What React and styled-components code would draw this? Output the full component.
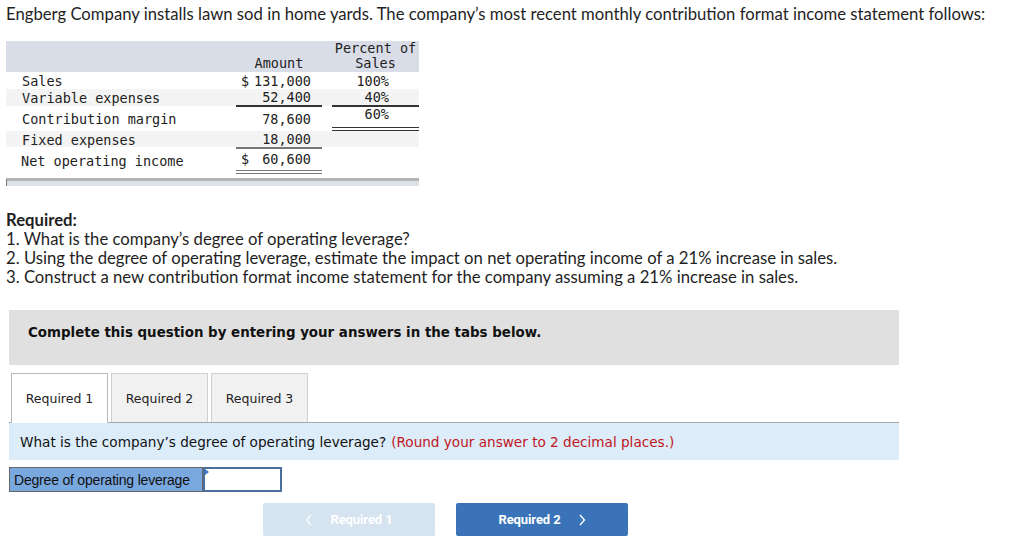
import React from "react";
import styled, { createGlobalStyle } from "styled-components";

const Global = createGlobalStyle`
  html, body { margin: 0; padding: 0; background: #fff; }
  body { font-family: "Lato", "Open Sans", sans-serif; color: #222; }
`;

const Page = styled.div`
  width: 1024px;
  height: 543px;
  overflow: hidden;
  padding-left: 6px;
  box-sizing: border-box;
`;

const Intro = styled.p`
  margin: 0;
  padding-top: 4px;
  font-size: 16.7px;
  line-height: 20px;
  color: #1f1f1f;
`;

const Statement = styled.div`
  margin-top: 17px;
  width: 413px;
  font-family: "DejaVu Sans Mono", monospace;
  font-size: 13.5px;
  color: #222;
`;

const Row = styled.div`
  display: grid;
  grid-template-columns: 230px 86px 10px 87px;
  height: ${(p) => p.$h}px;
  background: ${(p) => p.$bg || "#fff"};
  align-items: ${(p) => p.$align || "center"};
`;

const Label = styled.div`
  padding-left: ${(p) => p.$pl ?? 16}px;
  white-space: pre;
`;

const Cell = styled.div`
  height: 100%;
  box-sizing: border-box;
  display: flex;
  align-items: ${(p) => p.$align || "center"};
  justify-content: ${(p) => p.$justify || "flex-end"};
  padding: ${(p) => p.$pad || "0 11px 0 5px"};
  border-bottom: ${(p) =>
    p.$line === "single"
      ? "2px solid #333"
      : p.$line === "double"
      ? "4px double #333"
      : p.$line === "gray"
      ? "2px solid #777"
      : p.$line === "graydouble"
      ? "4px double #777"
      : "none"};
  white-space: pre;
`;

const HeadCell = styled.div`
  text-align: center;
  line-height: 15px;
  padding-bottom: 1px;
  white-space: pre;
`;

const ScrollBar = styled.div`
  margin-top: 4px;
  height: 5px;
  border-top: 3px solid #b5b5b5;
  border-left: 1px solid #777;
  background: #dde1ea;
`;

const Required = styled.div`
  margin-top: 25px;
  font-size: 16.7px;
  line-height: 19px;
  color: #1f1f1f;
`;

const Bold = styled.div`
  font-weight: 700;
`;

const Section = styled.div`
  margin-left: 3px;
  width: 890px;
`;

const Notice = styled.div`
  margin-top: 23px;
  height: 55px;
  box-sizing: border-box;
  background: #e0e0e0;
  padding: 15px 0 0 19px;
  line-height: 16px;
  font-family: "DejaVu Sans", Verdana, sans-serif;
  font-weight: 700;
  font-size: 13.4px;
  color: #111;
`;

const Tabs = styled.div`
  margin-top: 8px;
  display: flex;
  gap: 3px;
  padding-left: 2px;
  border-bottom: 1px solid #a8a8a8;
`;

const Tab = styled.div`
  width: 97px;
  box-sizing: border-box;
  display: flex;
  align-items: center;
  justify-content: center;
  font-family: "DejaVu Sans", Verdana, sans-serif;
  font-size: 12.5px;
  color: #222;
  border: 1px solid ${(p) => (p.$active ? "#b8b8b8" : "#cfcfcf")};
  border-bottom: none;
  background: ${(p) => (p.$active ? "#fff" : "#f1f1f1")};
  margin-bottom: ${(p) => (p.$active ? "-1px" : "0")};
  height: ${(p) => (p.$active ? "50px" : "49px")};
`;

const Question = styled.div`
  height: 37px;
  background: #dcecf9;
  display: flex;
  align-items: center;
  padding-left: 11px;
  font-family: "DejaVu Sans", Verdana, sans-serif;
  font-size: 13.6px;
  color: #111;
`;

const Hint = styled.span`
  color: #c0161c;
  margin-left: 5px;
`;

const AnswerRow = styled.div`
  margin-top: 7px;
  display: flex;
  height: 25px;
`;

const AnswerLabel = styled.div`
  width: 194px;
  box-sizing: border-box;
  background: #79a8df;
  border: 1px solid #666;
  display: flex;
  align-items: center;
  padding-left: 4px;
  font-family: "Liberation Sans", Arial, sans-serif;
  font-size: 14px;
  letter-spacing: -0.2px;
  color: #111;
`;

const AnswerInput = styled.div`
  position: relative;
  width: 79px;
  box-sizing: border-box;
  background: #fff;
  border: 2px solid #4a6f9c;
`;

const Flag = styled.span`
  position: absolute;
  left: 0;
  top: 0;
  width: 0;
  height: 0;
  border-top: 3px solid transparent;
  border-bottom: 3px solid transparent;
  border-left: 4px solid #3a78c8;
`;

const Nav = styled.div`
  margin-top: 11px;
  display: flex;
  gap: 21px;
  padding-left: 254px;
`;

const NavButton = styled.div`
  width: 172px;
  height: 33px;
  border-radius: 2px;
  background: ${(p) => (p.$disabled ? "#d6e3f1" : "#3a73b8")};
  color: #fff;
  display: flex;
  align-items: center;
  justify-content: center;
  gap: 17px;
  font-family: "Roboto", "Liberation Sans", sans-serif;
  font-weight: 700;
  font-size: 13px;
  letter-spacing: -0.1px;
`;

const Chevron = ({ dir }) => (
  <svg width="8" height="12" viewBox="0 0 8 12" aria-hidden="true">
    <path
      d={dir === "left" ? "M6 1 L1.5 6 L6 11" : "M2 1 L6.5 6 L2 11"}
      fill="none"
      stroke="#fff"
      strokeWidth="1.4"
    />
  </svg>
);

export default function App() {
  return (
    <Page>
      <Global />
      <Intro>
        Engberg Company installs lawn sod in home yards. The company’s most recent
        monthly contribution format income statement follows:
      </Intro>

      <Statement>
        <Row $h={31} $bg="#d9dde7" $align="end">
          <div />
          <HeadCell>Amount</HeadCell>
          <div />
          <HeadCell>{"Percent of\nSales"}</HeadCell>
        </Row>
        <Row $h={17}>
          <Label>Sales</Label>
          <Cell $justify="space-between">
            <span>$</span>
            <span>131,000</span>
          </Cell>
          <div />
          <Cell $pad="0 30px 0 0">100%</Cell>
        </Row>
        <Row $h={17} $bg="#f4f4f4">
          <Label>Variable expenses</Label>
          <Cell $line="single">52,400</Cell>
          <div />
          <Cell $pad="0 30px 0 0" $line="single">40%</Cell>
        </Row>
        <Row $h={25}>
          <Label>Contribution margin</Label>
          <Cell>78,600</Cell>
          <div />
          <Cell $pad="0 30px 0 0" $align="flex-start" $line="double">60%</Cell>
        </Row>
        <Row $h={16} $bg="#f4f4f4">
          <Label>Fixed expenses</Label>
          <Cell $line="gray">18,000</Cell>
          <div />
          <div />
        </Row>
        <Row $h={27}>
          <Label $pl={15}>Net operating income</Label>
          <Cell $justify="space-between" $line="graydouble">
            <span>$</span>
            <span>60,600</span>
          </Cell>
          <div />
          <div />
        </Row>
        <ScrollBar />
      </Statement>

      <Required>
        <Bold>Required:</Bold>
        <div>1. What is the company’s degree of operating leverage?</div>
        <div>
          2. Using the degree of operating leverage, estimate the impact on net
          operating income of a 21% increase in sales.
        </div>
        <div>
          3. Construct a new contribution format income statement for the company
          assuming a 21% increase in sales.
        </div>
      </Required>

      <Section>
        <Notice>Complete this question by entering your answers in the tabs below.</Notice>
        <Tabs>
          <Tab $active>Required 1</Tab>
          <Tab>Required 2</Tab>
          <Tab>Required 3</Tab>
        </Tabs>
        <Question>
          What is the company’s degree of operating leverage?
          <Hint>(Round your answer to 2 decimal places.)</Hint>
        </Question>
        <AnswerRow>
          <AnswerLabel>Degree of operating leverage</AnswerLabel>
          <AnswerInput>
            <Flag />
          </AnswerInput>
        </AnswerRow>
        <Nav>
          <NavButton $disabled>
            <Chevron dir="left" />
            <span>Required 1</span>
          </NavButton>
          <NavButton>
            <span>Required 2</span>
            <Chevron dir="right" />
          </NavButton>
        </Nav>
      </Section>
    </Page>
  );
}
